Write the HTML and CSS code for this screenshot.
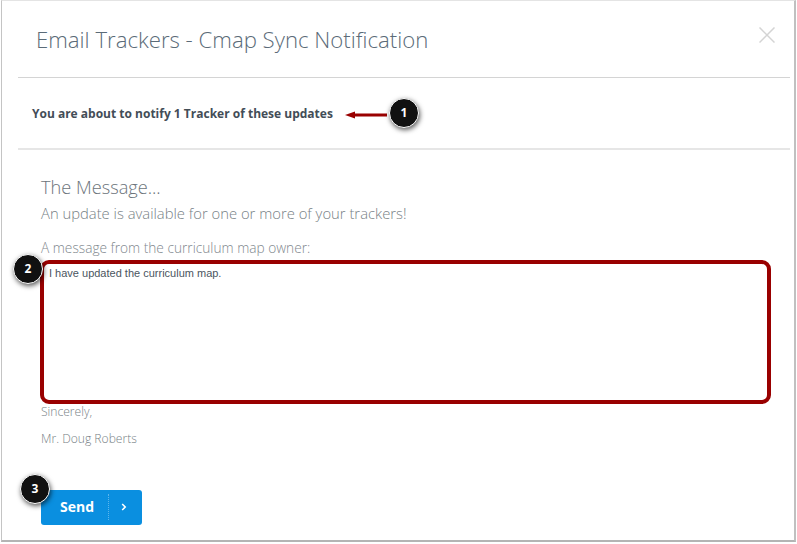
FILE: index.html
```html
<!DOCTYPE html>
<html lang="en">
<head>
  <meta charset="UTF-8">
  <title>Email Trackers - Cmap Sync Notification</title>
  <link rel="stylesheet" href="styles.css">
</head>
<body>

  <div class="dialog">
    <header class="head">
      <h1 class="title">Email Trackers - Cmap Sync Notification</h1>
      <svg class="close" viewBox="0 0 16 16" width="16" height="16">
        <path d="M0.5 0.5 L15.5 15.5 M15.5 0.5 L0.5 15.5" stroke="#d4d4d4" stroke-width="1.5" fill="none"/>
      </svg>
    </header>

    <div class="notify">
      <strong class="notify-text">You are about to notify 1 Tracker of these updates</strong>
    </div>

    <div class="message">
      <h2 class="message-title">The Message...</h2>
      <p class="message-sub">An update is available for one or more of your trackers!</p>
      <p class="label">A message from the curriculum map owner:</p>
      <div class="box">I have updated the curriculum map.</div>
      <p class="sign">Sincerely,</p>
      <p class="sign sign-name">Mr. Doug Roberts</p>
      <button class="send" type="button">
        <span class="send-text">Send</span>
        <svg class="send-arrow" viewBox="0 0 6 8" width="6" height="8">
          <path d="M1.2 1 L4.2 4 L1.2 7" stroke="#fff" stroke-width="1.6" fill="none"/>
        </svg>
      </button>
    </div>
  </div>

  <!-- Callouts on top of the dialog -->
  <svg class="arrow" viewBox="0 0 44 10" width="44" height="10">
    <path d="M43 5 H10" stroke="#990000" stroke-width="3"/>
    <path d="M1 5 L11 1.5 V8.5 Z" fill="#990000"/>
  </svg>
  <span class="badge badge-1">1</span>
  <span class="badge badge-2">2</span>
  <span class="badge badge-3">3</span>

</body>
</html>
```

FILE: styles.css
```css
* {
  box-sizing: border-box;
}

body {
  margin: 0;
  width: 797px;
  height: 544px;
  background: #fff;
  overflow: hidden;
  position: relative;
  font-family: "Open Sans", sans-serif;
}

.dialog {
  width: 795px;
  height: 542px;
  margin-left: 1px;
  padding: 0 4px 0 16px;
  background: #fff;
  border: 1px solid #c4c4c4;
  border-top-color: #e4e4e4;
  border-bottom: 2px solid #b4b4b4;
  border-right: 2px solid #c0c0c0;
  display: flex;
  flex-direction: column;
}

.head {
  height: 77px;
  flex: none;
  padding: 0 15px 0 18px;
  border-bottom: 1px solid #d4d4d4;
  display: flex;
  justify-content: space-between;
  align-items: flex-start;
}

.title {
  margin: 24px 0 0;
  font-size: 22.2px;
  line-height: 30px;
  font-weight: 300;
  color: #5b6b78;
}

.close {
  margin-top: 26px;
}

.notify {
  height: 72px;
  flex: none;
  padding: 0 14px;
  border-bottom: 2px solid #e6e6e6;
  display: flex;
  align-items: center;
}

.notify-text {
  font-size: 12px;
  font-weight: 700;
  color: #434d57;
}

.message {
  padding: 25px 19px 0 23px;
  flex: 1;
}

.message-title {
  margin: 0;
  font-size: 18.2px;
  line-height: 24px;
  font-weight: 300;
  color: #6c747b;
}

.message-sub {
  margin: 3px 0 0;
  font-size: 14.8px;
  line-height: 22px;
  font-weight: 300;
  color: #777f86;
}

.label {
  margin: 15px 0 0;
  font-size: 13.7px;
  line-height: 18px;
  font-weight: 300;
  color: #81888e;
}

.box {
  height: 144px;
  margin: 3px 0 0 -1px;
  padding: 3px 5px;
  border: 4px solid #990000;
  border-radius: 9px;
  font-family: "Liberation Sans", sans-serif;
  font-size: 11px;
  line-height: 12px;
  color: #4a5560;
}

.sign {
  margin: 0;
  font-size: 12.1px;
  line-height: 16px;
  font-weight: 300;
  color: #777f86;
}

.sign-name {
  margin-top: 11px;
}

.send {
  width: 101px;
  height: 35px;
  margin-top: 43px;
  padding: 0 15px 2px 19px;
  background: #0a8fe0;
  border: 0;
  border-radius: 3px;
  display: flex;
  align-items: center;
  justify-content: space-between;
  font-family: inherit;
  font-size: 14px;
  font-weight: 700;
  color: #fff;
}

.send-text {
  padding-right: 14px;
  line-height: 26px;
  border-right: 1px dotted #5db6ec;
}

.arrow {
  position: absolute;
  left: 344px;
  top: 110px;
}

.badge {
  position: absolute;
  width: 30px;
  height: 30px;
  border-radius: 50%;
  background: #111;
  border: 1.5px solid #fff;
  box-shadow: 1px 2px 5px rgba(0, 0, 0, 0.65);
  color: #fff;
  font-size: 12px;
  font-weight: 700;
  line-height: 27px;
  text-align: center;
}

.badge-1 { left: 389px; top: 98px; }
.badge-2 { left: 13px; top: 254px; }
.badge-3 { left: 20px; top: 474px; }
```
